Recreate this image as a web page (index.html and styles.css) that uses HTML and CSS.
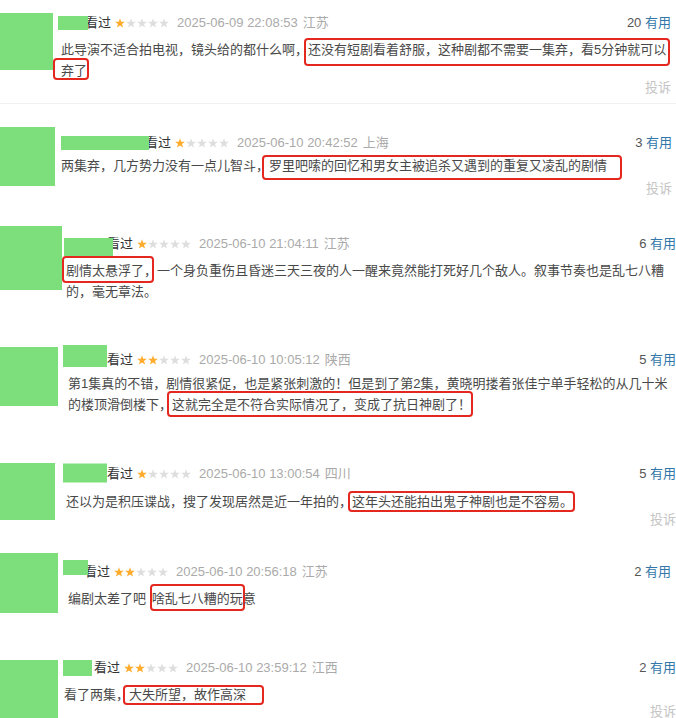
FILE: index.html
```html
<!DOCTYPE html>
<html lang="zh-CN">
  <head>
    <meta charset="UTF-8" />
    <meta name="viewport" content="width=device-width, initial-scale=1.0" />
    <title>短评</title>
    <link rel="stylesheet" href="styles.css">
  </head>
  <body>
    <div class="comments">
      <div class="comment c1">
        <div class="avatar"></div>
        <div class="body">
          <div class="head">
            <span class="info">
              <span class="name"></span><span class="seen">看过</span>
              <svg class="stars" viewBox="0 0 54 11"><use href="#star" x="0" class="on"/><use href="#star" x="11"/><use href="#star" x="22"/><use href="#star" x="33"/><use href="#star" x="44"/></svg>
              <span class="time">2025-06-09 22:08:53</span><span class="loc">江苏</span>
            </span>
            <span class="votes"><span class="count">20</span> <a class="useful">有用</a></span>
          </div>
          <p class="text">此导演不适合拍电视，镜头给的都什么啊，<span class="mark m1a">还没有短剧看着舒服，这种剧都不需要一集弃，看5分钟就可以</span><br><span class="mark m1b">弃了</span></p>
          <div class="report">投诉</div>
        </div>
      </div>

      <div class="comment c2">
        <div class="avatar"></div>
        <div class="body">
          <div class="head">
            <span class="info">
              <span class="name"></span><span class="seen">看过</span>
              <svg class="stars" viewBox="0 0 54 11"><use href="#star" x="0" class="on"/><use href="#star" x="11"/><use href="#star" x="22"/><use href="#star" x="33"/><use href="#star" x="44"/></svg>
              <span class="time">2025-06-10 20:42:52</span><span class="loc">上海</span>
            </span>
            <span class="votes"><span class="count">3</span> <a class="useful">有用</a></span>
          </div>
          <p class="text">两集弃，几方势力没有一点儿智斗，<span class="mark m2">罗里吧嗦的回忆和男女主被追杀又遇到的重复又凌乱的剧情</span></p>
          <div class="report">投诉</div>
        </div>
      </div>

      <div class="comment c3">
        <div class="avatar"></div>
        <div class="body">
          <div class="head">
            <span class="info">
              <span class="name"></span><span class="seen">看过</span>
              <svg class="stars" viewBox="0 0 54 11"><use href="#star" x="0" class="on"/><use href="#star" x="11"/><use href="#star" x="22"/><use href="#star" x="33"/><use href="#star" x="44"/></svg>
              <span class="time">2025-06-10 21:04:11</span><span class="loc">江苏</span>
            </span>
            <span class="votes"><span class="count">6</span> <a class="useful">有用</a></span>
          </div>
          <p class="text"><span class="mark m3">剧情太悬浮了</span>，一个身负重伤且昏迷三天三夜的人一醒来竟然能打死好几个敌人。叙事节奏也是乱七八糟<br>的，毫无章法。</p>
        </div>
      </div>

      <div class="comment c4">
        <div class="avatar"></div>
        <div class="body">
          <div class="head">
            <span class="info">
              <span class="name"></span><span class="seen">看过</span>
              <svg class="stars" viewBox="0 0 54 11"><use href="#star" x="0" class="on"/><use href="#star" x="11" class="on"/><use href="#star" x="22"/><use href="#star" x="33"/><use href="#star" x="44"/></svg>
              <span class="time">2025-06-10 10:05:12</span><span class="loc">陕西</span>
            </span>
            <span class="votes"><span class="count">5</span> <a class="useful">有用</a></span>
          </div>
          <p class="text">第1集真的不错，剧情很紧促，也是紧张刺激的！但是到了第2集，黄晓明搂着张佳宁单手轻松的从几十米<br>的楼顶滑倒楼下，<span class="mark m4">这就完全是不符合实际情况了，变成了抗日神剧了！</span></p>
        </div>
      </div>

      <div class="comment c5">
        <div class="avatar"></div>
        <div class="body">
          <div class="head">
            <span class="info">
              <span class="name"></span><span class="seen">看过</span>
              <svg class="stars" viewBox="0 0 54 11"><use href="#star" x="0" class="on"/><use href="#star" x="11"/><use href="#star" x="22"/><use href="#star" x="33"/><use href="#star" x="44"/></svg>
              <span class="time">2025-06-10 13:00:54</span><span class="loc">四川</span>
            </span>
            <span class="votes"><span class="count">5</span> <a class="useful">有用</a></span>
          </div>
          <p class="text">还以为是积压谍战，搜了发现居然是近一年拍的，<span class="mark m5">这年头还能拍出鬼子神剧也是不容易。</span></p>
          <div class="report">投诉</div>
        </div>
      </div>

      <div class="comment c6">
        <div class="avatar"></div>
        <div class="body">
          <div class="head">
            <span class="info">
              <span class="name"></span><span class="seen">看过</span>
              <svg class="stars" viewBox="0 0 54 11"><use href="#star" x="0" class="on"/><use href="#star" x="11" class="on"/><use href="#star" x="22"/><use href="#star" x="33"/><use href="#star" x="44"/></svg>
              <span class="time">2025-06-10 20:56:18</span><span class="loc">江苏</span>
            </span>
            <span class="votes"><span class="count">2</span> <a class="useful">有用</a></span>
          </div>
          <p class="text">编剧太差了吧 <span class="mark m6">啥乱七八糟的玩</span>意</p>
        </div>
      </div>

      <div class="comment c7">
        <div class="avatar"></div>
        <div class="body">
          <div class="head">
            <span class="info">
              <span class="name"></span><span class="seen">看过</span>
              <svg class="stars" viewBox="0 0 54 11"><use href="#star" x="0" class="on"/><use href="#star" x="11" class="on"/><use href="#star" x="22"/><use href="#star" x="33"/><use href="#star" x="44"/></svg>
              <span class="time">2025-06-10 23:59:12</span><span class="loc">江西</span>
            </span>
            <span class="votes"><span class="count">2</span> <a class="useful">有用</a></span>
          </div>
          <p class="text">看了两集，<span class="mark m7">大失所望，故作高深</span></p>
          <div class="report">投诉</div>
        </div>
      </div>
    </div>

    <svg class="defs" width="0" height="0">
      <defs>
        <polygon id="star" points="5,0.3 6.2,3.7 9.9,3.8 7,6 8.1,9.6 5,7.5 1.9,9.6 3,6 0.1,3.8 3.8,3.7" />
      </defs>
    </svg>
  </body>
</html>
```

FILE: styles.css
```css
body {
  margin: 0;
  background: #fff;
  font-family: 'Liberation Sans', Arial, 'Noto Sans CJK SC', sans-serif;
  font-size: 13px;
  color: #494949;
  overflow: hidden;
}
.defs {
  position: absolute;
  width: 0;
  height: 0;
}

/* one block per pasted comment, offsets differ a little per slice */
.comment {
  display: flex;
  align-items: flex-start;
  height: var(--h);
  box-sizing: border-box;
  overflow: hidden;
}
.c1 {
  border-bottom: 1px solid #f0f0f0;
}
.avatar {
  flex: none;
  margin-top: var(--av-t);
  width: var(--av-w);
  height: var(--av-h);
  background: #7ddf7c;
}
.body {
  flex: 1;
  min-width: 0;
  margin-left: var(--gap);
  padding-top: var(--head-t);
  padding-right: var(--pr);
  display: flex;
  flex-direction: column;
}
.head {
  display: flex;
  justify-content: space-between;
  align-items: center;
  height: 20px;
  line-height: 20px;
  white-space: nowrap;
}
.info {
  display: flex;
  align-items: center;
}
.name {
  display: block;
  width: var(--name-w);
  height: var(--name-h);
  margin-right: var(--name-mr);
  background: #7ddf7c;
  transform: translateY(var(--name-dy));
}
.seen {
  color: #333;
  margin-right: 4px;
}
.stars {
  width: 54px;
  height: 11px;
  margin-right: 8px;
  fill: #dedede;
}
.stars .on {
  fill: #ffac2d;
}
.time {
  color: #aaa;
  margin-right: 5px;
}
.loc {
  color: #aaa;
}
.votes .count {
  color: #555;
}
.useful {
  color: #3377aa;
  text-decoration: none;
}
.text {
  margin: var(--text-t) 0 0;
  padding-left: var(--text-l);
  line-height: 21px;
  white-space: nowrap;
}
.report {
  margin-top: var(--rep-t);
  align-self: flex-end;
  line-height: 20px;
  color: #c5c5c5;
}

.mark {
  border: 2px solid #e5281f;
  border-radius: 4px;
}
.m1a { padding: 2px 2px 7px 2px; margin: 0 -4px; }
.m1b { padding: 3px 0 0 6px; margin: 0 -2px 0 -8px; }
.m2 { padding: 1px 13px 5px 5px; margin: 0 -15px 0 -7px; }
.m3 { padding: 5px 8px 3px 2px; margin: 0 -10px 0 -4px; }
.m4 { padding: 4px 0 3px 3px; margin: 0 -2px 0 -5px; }
.m5 { padding: 1px 0 1px 2px; margin: 0 -2px 0 -4px; }
.m6 { padding: 5px 0 3px 0; margin: 0 -2px 0 0; }
.m7 { padding: 0 16px 1px 4px; margin: 0 -18px 0 -6px; }

.c1 {
  --h: 104px; --av-t: 13px; --av-w: 53px; --av-h: 57px; --gap: 5px;
  --head-t: 13px; --name-w: 30px; --name-h: 14px; --name-dy: 0px; --name-mr: -3px;
  --text-l: 3px; --text-t: 5.5px; --rep-t: -2.5px; --pr: 5px;
}
.c2 {
  --h: 114px; --av-t: 23px; --av-w: 55px; --av-h: 59px; --gap: 6px;
  --head-t: 29px; --name-w: 88px; --name-h: 14px; --name-dy: 0px; --name-mr: -4px;
  --text-l: 0px; --text-t: 1.5px; --rep-t: 3.5px; --pr: 4px;
}
.c3 {
  --h: 117px; --av-t: 8px; --av-w: 62px; --av-h: 64px; --gap: 2px;
  --head-t: 16px; --name-w: 49px; --name-h: 18px; --name-dy: 3px; --name-mr: -6px;
  --text-l: 2px; --text-t: 5.5px; --rep-t: 0px; --pr: 0px;
}
.c4 {
  --h: 117px; --av-t: 12px; --av-w: 58px; --av-h: 59px; --gap: 5px;
  --head-t: 15px; --name-w: 44px; --name-h: 22px; --name-dy: -4px; --name-mr: 0px;
  --text-l: 5px; --text-t: 2.5px; --rep-t: 0px; --pr: 0px;
}
.c5 {
  --h: 93px; --av-t: 11px; --av-w: 55px; --av-h: 57px; --gap: 8px;
  --head-t: 12px; --name-w: 44px; --name-h: 19px; --name-dy: -1.5px; --name-mr: 0px;
  --text-l: 3px; --text-t: 6.5px; --rep-t: -1.5px; --pr: 0px;
}
.c6 {
  --h: 103px; --av-t: 8px; --av-w: 58px; --av-h: 60px; --gap: 5px;
  --head-t: 17px; --name-w: 25px; --name-h: 15px; --name-dy: -5px; --name-mr: -4px;
  --text-l: 5px; --text-t: 5.5px; --rep-t: 0px; --pr: 5px;
}
.c7 {
  --h: 70px; --av-t: 12px; --av-w: 58px; --av-h: 62px; --gap: 5px;
  --head-t: 10px; --name-w: 29px; --name-h: 16px; --name-dy: 0px; --name-mr: 2px;
  --text-l: 1px; --text-t: 5.5px; --rep-t: -3px; --pr: 0px;
}
```
